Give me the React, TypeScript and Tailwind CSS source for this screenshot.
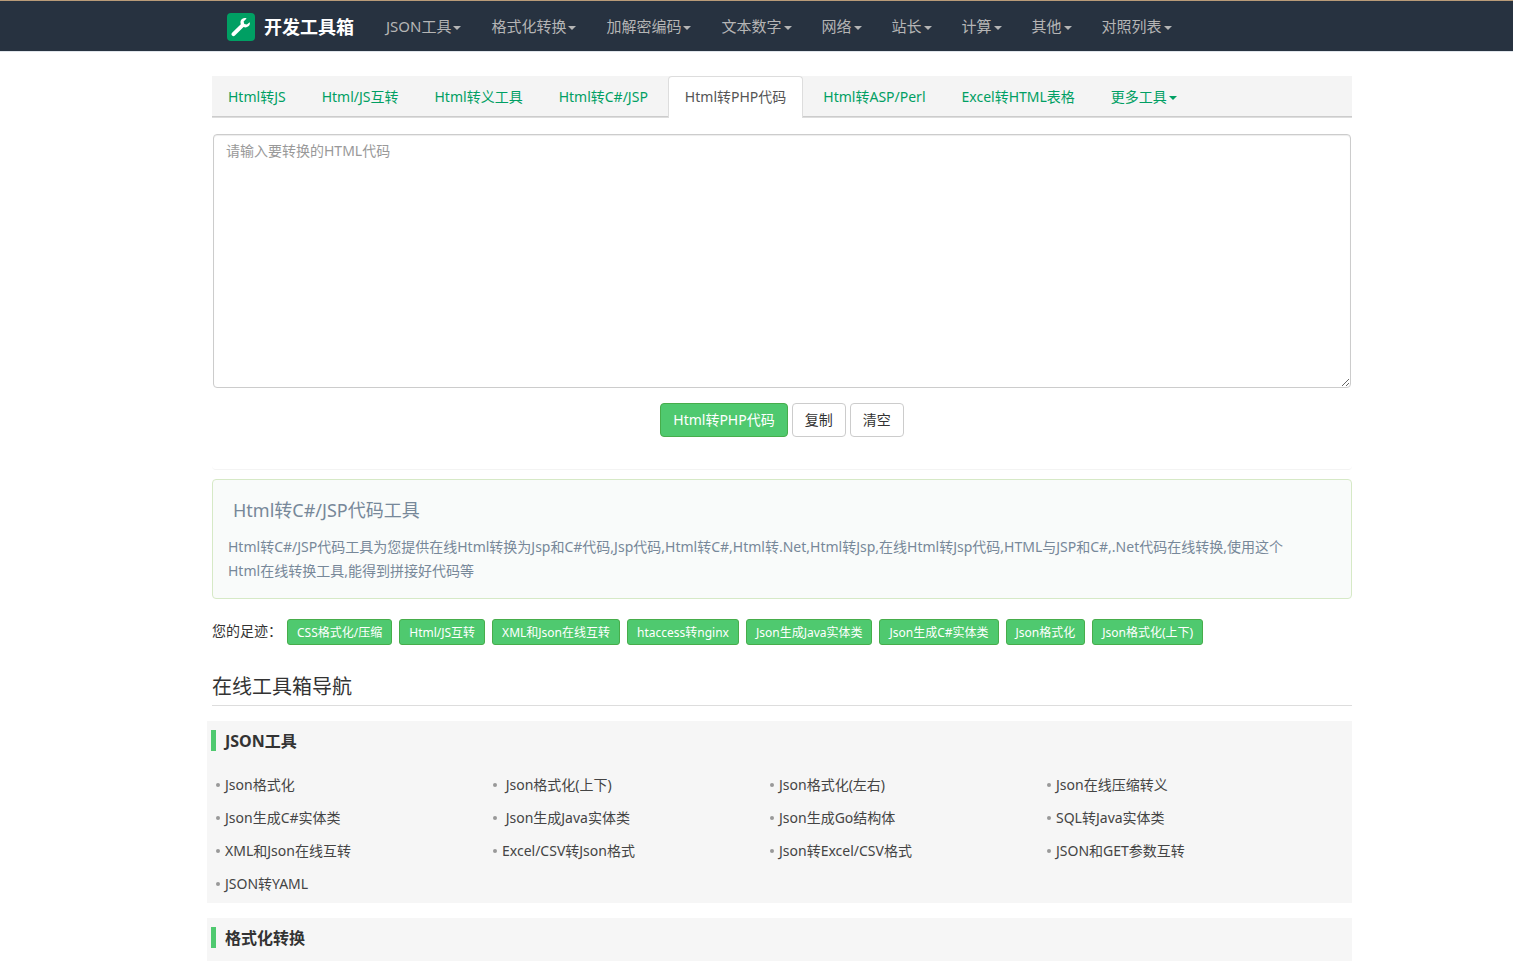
import { useState } from 'react';

interface NavSection {
  title: string;
  links: string[];
}

const NAV_ITEMS = ['JSON工具', '格式化转换', '加解密编码', '文本数字', '网络', '站长', '计算', '其他', '对照列表'];

const TABS = [
  'Html转JS',
  'Html/JS互转',
  'Html转义工具',
  'Html转C#/JSP',
  'Html转PHP代码',
  'Html转ASP/Perl',
  'Excel转HTML表格',
];

const ACTIVE_TAB = 'Html转PHP代码';

const FOOTPRINTS = [
  'CSS格式化/压缩',
  'Html/JS互转',
  'XML和Json在线互转',
  'htaccess转nginx',
  'Json生成Java实体类',
  'Json生成C#实体类',
  'Json格式化',
  'Json格式化(上下)',
];

// A leading space in a link name is kept when it is drawn
const SECTIONS: NavSection[] = [
  {
    title: 'JSON工具',
    links: [
      'Json格式化',
      ' Json格式化(上下)',
      'Json格式化(左右)',
      'Json在线压缩转义',
      'Json生成C#实体类',
      ' Json生成Java实体类',
      'Json生成Go结构体',
      'SQL转Java实体类',
      'XML和Json在线互转',
      'Excel/CSV转Json格式',
      'Json转Excel/CSV格式',
      'JSON和GET参数互转',
      'JSON转YAML',
    ],
  },
  { title: '格式化转换', links: [] },
];

function Caret() {
  return (
    <span className="ml-0.5 inline-block border-x-4 border-t-4 border-x-transparent border-t-current align-middle" />
  );
}

function Logo() {
  return (
    <svg viewBox="0 0 28 28" className="size-7 flex-shrink-0" aria-hidden="true">
      <rect width="28" height="28" rx="4" fill="#009f63" />
      <path
        d="M22.7 9.2 19.9 11.6 17.3 11.1 16.6 8.5 19.6 5.4C17.2 4.5 14.7 5.5 13.8 7.6 13.3 8.9 13.4 10 13.8 11.2L5.1 19.7C4.2 20.7 4.3 21.9 5.1 22.6 5.9 23.4 7.1 23.3 7.9 22.5L16.6 13.9C18.1 14.7 20 14.5 21.4 13.3 22.7 12.2 23.2 10.7 22.7 9.2Z"
        fill="#fff"
      />
    </svg>
  );
}

function Navbar() {
  return (
    <nav className="border-t border-b border-t-[#b99b78] border-b-[#e0e5eb] bg-[#273240] pl-[51px]">
      <div className="mx-auto flex h-[50px] max-w-[1170px] items-center pl-[30px]">
        <a href="#" className="flex items-center gap-[9px] pt-0.5 pr-[17px] text-lg font-bold text-white">
          <Logo />
          开发工具箱
        </a>
        <ul className="flex">
          {NAV_ITEMS.map((item) => (
            <li key={item}>
              <a href="#" className="block px-[15px] text-[15px] leading-5 whitespace-nowrap text-[#b5b5b5]">
                {item}
                <Caret />
              </a>
            </li>
          ))}
        </ul>
      </div>
    </nav>
  );
}

function Tabs() {
  return (
    <ul className="flex h-[42px] border-b border-[#ddd] bg-[#f4f4f4] shadow-[inset_0_-1px_0_#ccc]">
      {TABS.map((tab) => (
        <li key={tab} className="mr-1">
          <a
            href="#"
            className={
              tab === ACTIVE_TAB
                ? 'block h-[42px] rounded-t border border-b-0 border-[#ddd] bg-white px-4 py-2.5 leading-5 whitespace-nowrap text-[#555]'
                : 'block border-y border-transparent px-4 py-2.5 leading-5 whitespace-nowrap text-[#009f63]'
            }
          >
            {tab}
          </a>
        </li>
      ))}
      <li>
        <a href="#" className="block border-y border-transparent px-4 py-2.5 leading-5 whitespace-nowrap text-[#009f63]">
          更多工具
          <Caret />
        </a>
      </li>
    </ul>
  );
}

function Converter() {
  const [code, setCode] = useState('');
  const plainButton = 'h-[34px] rounded border border-[#ccc] bg-white px-3 leading-5 text-[#333]';

  return (
    <form className="rounded-b border-b border-[#f4f4f4] pb-8" onSubmit={(e) => e.preventDefault()}>
      <div className="mt-4 px-px">
        <textarea
          aria-label="HTML代码"
          placeholder="请输入要转换的HTML代码"
          className="block h-[254px] w-full resize rounded border border-[#ccc] bg-white px-3 py-1.5 leading-5 text-[#555] shadow-[inset_0_1px_1px_rgba(0,0,0,0.075)] placeholder:text-[#999]"
          value={code}
          onChange={(e) => setCode(e.target.value)}
        />
      </div>
      <div className="mt-[15px] flex justify-center gap-1">
        <button type="submit" className="h-[34px] rounded border border-[#47ad4b] bg-[#4fc96f] px-3 leading-5 text-white">
          Html转PHP代码
        </button>
        <button type="button" className={plainButton} onClick={() => navigator.clipboard.writeText(code)}>
          复制
        </button>
        <button type="button" className={plainButton} onClick={() => setCode('')}>
          清空
        </button>
      </div>
    </form>
  );
}

function Intro() {
  return (
    <section className="mt-[9px] rounded border border-[#d6e9c6] bg-[#f9fbfa] px-[15px] pt-5 pb-[15px] text-[#778899]">
      <h1 className="px-[5px] text-lg leading-5">Html转C#/JSP代码工具</h1>
      <p className="mt-[15px] pr-6 leading-6">
        Html转C#/JSP代码工具为您提供在线Html转换为Jsp和C#代码,Jsp代码,Html转C#,Html转.Net,Html转Jsp,在线Html转Jsp代码,HTML与JSP和C#,.Net代码在线转换,使用这个Html在线转换工具,能得到拼接好代码等
      </p>
    </section>
  );
}

function Footprints() {
  return (
    <div className="mt-5 flex items-start">
      <span className="w-[75px] leading-6">您的足迹：</span>
      <div className="flex flex-wrap gap-[7px]">
        {FOOTPRINTS.map((name) => (
          <a
            key={name}
            href="#"
            className="rounded-[3px] border border-[#47ad4b] bg-[#4fc96f] px-[9px] pt-1 pb-0.5 text-xs leading-[18px] whitespace-nowrap text-white"
          >
            {name}
          </a>
        ))}
      </div>
    </div>
  );
}

function SectionPanel({ section }: { section: NavSection }) {
  return (
    <section className="mb-[15px] -ml-[5px] bg-[#f6f6f6] px-1 pt-[9px] pb-[3px]">
      <h3 className="border-l-[5px] border-[#4fc96f] pt-0.5 pl-[9px] text-base leading-[19px] font-bold">{section.title}</h3>
      <ul className="mt-[17px] grid grid-cols-4 pr-[29px]">
        {section.links.map((link) => (
          <li key={link} className="flex h-[33px] items-center pl-[5px]">
            <span className="mr-[5px] size-1 rounded-full bg-[#999]" />
            <a href="#" className="whitespace-pre text-[#444]">
              {link}
            </a>
          </li>
        ))}
      </ul>
    </section>
  );
}

export default function App() {
  return (
    <div className="h-screen overflow-y-auto bg-white font-['Noto_Sans','Noto_Sans_CJK_SC',sans-serif] text-sm text-[#333] [scrollbar-width:none]">
      <Navbar />
      <div className="pl-[51px]">
        <main className="mx-auto max-w-[1170px] px-[15px] pt-6">
          <Tabs />
          <Converter />
          <Intro />
          <Footprints />
          <h2 className="mt-[26px] mb-[15px] border-b border-[#ddd] pb-[3px] text-xl leading-[31px]">在线工具箱导航</h2>
          {SECTIONS.map((section) => (
            <SectionPanel key={section.title} section={section} />
          ))}
        </main>
      </div>
    </div>
  );
}
